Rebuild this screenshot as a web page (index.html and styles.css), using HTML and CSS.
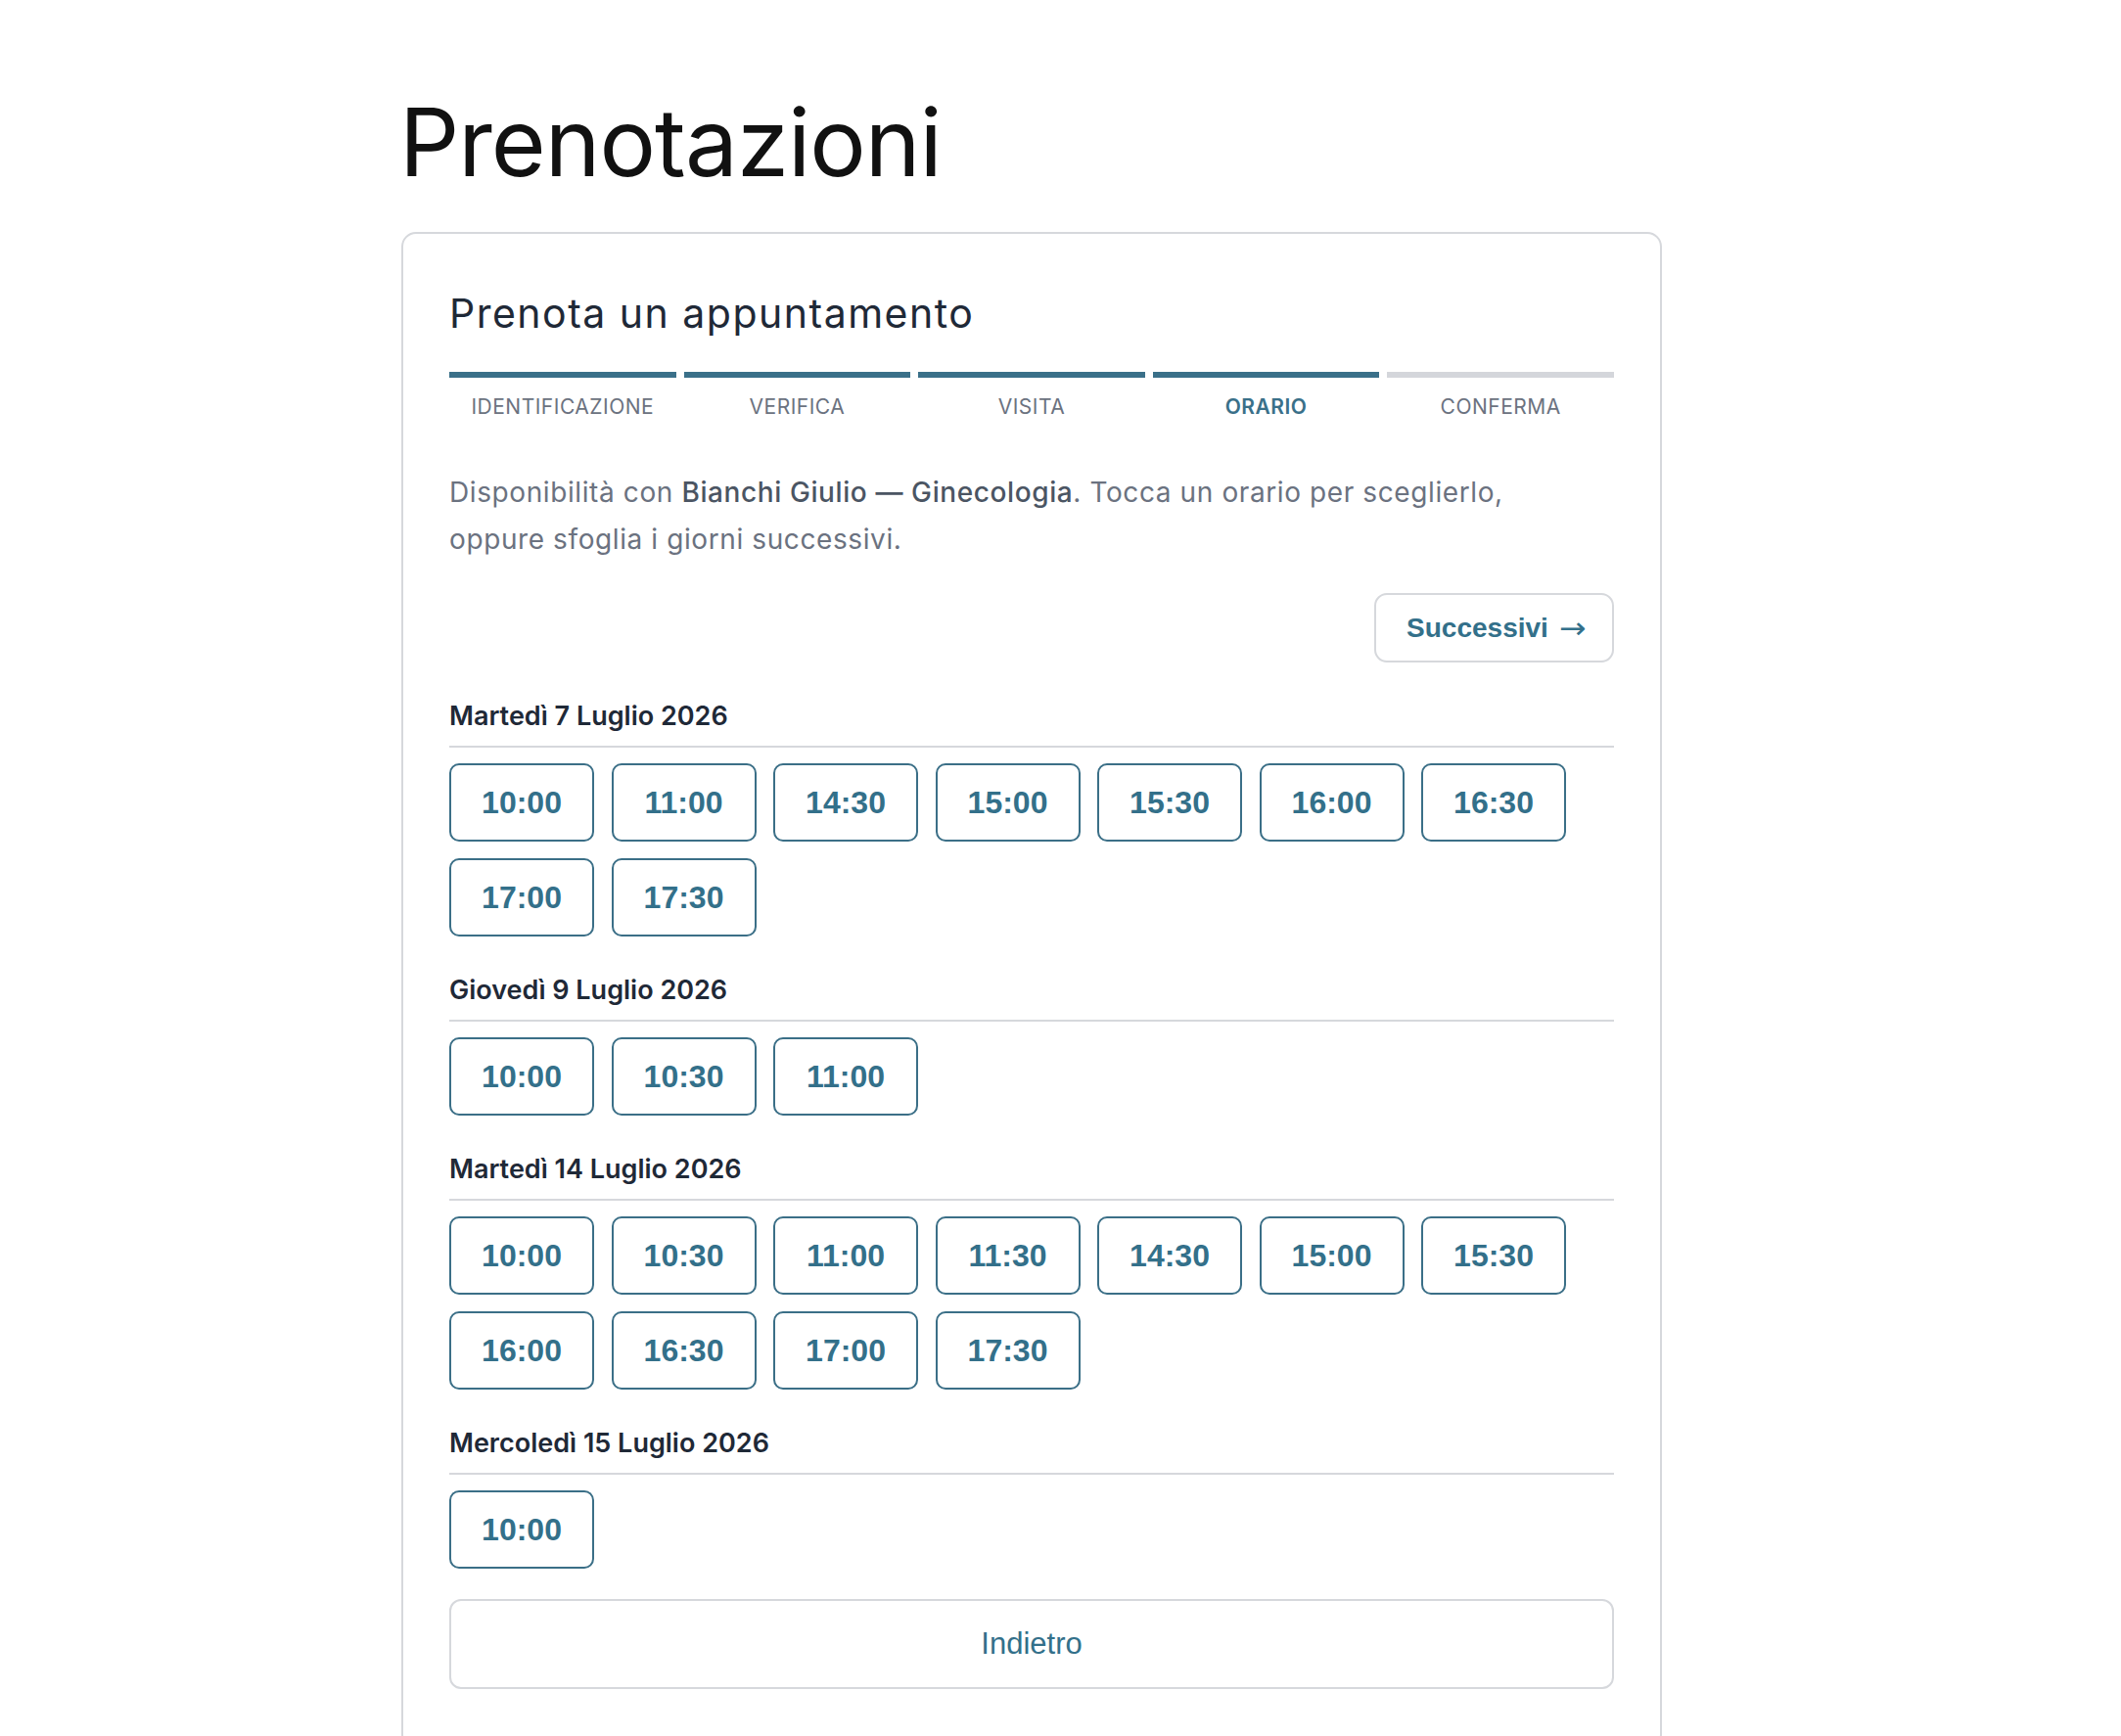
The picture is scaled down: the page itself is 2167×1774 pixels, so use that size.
FILE: index.html
```html
<!DOCTYPE html>
<html lang="it">
<head>
<meta charset="utf-8">
<title>Prenotazioni</title>
<link rel="stylesheet" href="styles.css">
</head>
<body>
<main class="page">
  <h1 class="page-title">Prenotazioni</h1>

  <section class="card">
    <h2 class="card-title">Prenota un appuntamento</h2>

    <ol class="steps">
      <li class="step done"><span class="step-bar"></span><span class="step-label">Identificazione</span></li>
      <li class="step done"><span class="step-bar"></span><span class="step-label">Verifica</span></li>
      <li class="step done"><span class="step-bar"></span><span class="step-label">Visita</span></li>
      <li class="step current"><span class="step-bar"></span><span class="step-label">Orario</span></li>
      <li class="step"><span class="step-bar"></span><span class="step-label">Conferma</span></li>
    </ol>

    <p class="intro">Disponibilità con <strong>Bianchi Giulio — Ginecologia</strong>. Tocca un orario per sceglierlo, oppure sfoglia i giorni successivi.</p>

    <div class="pager">
      <button class="btn-next" type="button">Successivi <span class="arrow">→</span></button>
    </div>

    <div class="day">
      <h3 class="day-title">Martedì 7 Luglio 2026</h3>
      <div class="slots">
        <button class="slot" type="button">10:00</button>
        <button class="slot" type="button">11:00</button>
        <button class="slot" type="button">14:30</button>
        <button class="slot" type="button">15:00</button>
        <button class="slot" type="button">15:30</button>
        <button class="slot" type="button">16:00</button>
        <button class="slot" type="button">16:30</button>
        <button class="slot" type="button">17:00</button>
        <button class="slot" type="button">17:30</button>
      </div>
    </div>

    <div class="day">
      <h3 class="day-title">Giovedì 9 Luglio 2026</h3>
      <div class="slots">
        <button class="slot" type="button">10:00</button>
        <button class="slot" type="button">10:30</button>
        <button class="slot" type="button">11:00</button>
      </div>
    </div>

    <div class="day">
      <h3 class="day-title">Martedì 14 Luglio 2026</h3>
      <div class="slots">
        <button class="slot" type="button">10:00</button>
        <button class="slot" type="button">10:30</button>
        <button class="slot" type="button">11:00</button>
        <button class="slot" type="button">11:30</button>
        <button class="slot" type="button">14:30</button>
        <button class="slot" type="button">15:00</button>
        <button class="slot" type="button">15:30</button>
        <button class="slot" type="button">16:00</button>
        <button class="slot" type="button">16:30</button>
        <button class="slot" type="button">17:00</button>
        <button class="slot" type="button">17:30</button>
      </div>
    </div>

    <div class="day">
      <h3 class="day-title">Mercoledì 15 Luglio 2026</h3>
      <div class="slots">
        <button class="slot" type="button">10:00</button>
      </div>
    </div>

    <button class="btn-back" type="button">Indietro</button>
  </section>
</main>
</body>
</html>
```

FILE: styles.css
```css
* {
  box-sizing: border-box;
}

html, body {
  margin: 0;
  padding: 0;
  background: #ffffff;
}

body {
  font-family: Inter, "Noto Sans", "Liberation Sans", sans-serif;
  color: #1f2937;
}

.page {
  width: 1288px;
  margin-left: 410px;
  padding-top: 88px;
  padding-bottom: 80px;
}

.page-title {
  margin: 0 0 34px -2px;
  font-size: 96px;
  line-height: 115px;
  font-weight: 400;
  letter-spacing: -1px;
  color: #111111;
}

/* booking card */
.card {
  border: 2px solid #d6d8dc;
  border-radius: 15px;
  padding: 56px 47px 60px;
}

.card-title {
  margin: 0;
  font-size: 41px;
  line-height: 50px;
  font-weight: 400;
  letter-spacing: 1.5px;
  color: #1f2937;
}

/* progress steps */
.steps {
  list-style: none;
  margin: 35px 0 0;
  padding: 0;
  display: grid;
  grid-template-columns: repeat(5, 1fr);
  column-gap: 8px;
}

.step {
  display: flex;
  flex-direction: column;
  align-items: center;
}

.step-bar {
  display: block;
  width: 100%;
  height: 6px;
  background: #d4d6db;
}

.step.done .step-bar,
.step.current .step-bar {
  background: #3a7089;
}

.step-label {
  margin-top: 15px;
  font-size: 21px;
  line-height: 30px;
  text-transform: uppercase;
  color: #6b7280;
  letter-spacing: 0.5px;
}

.step.current .step-label {
  color: #3a7089;
  font-weight: 600;
}

.intro {
  max-width: 1110px;
  margin: 48px 0 0;
  font-size: 28px;
  line-height: 48px;
  color: #6b7280;
  letter-spacing: 0.6px;
}

.intro strong {
  font-weight: 500;
  color: #4b5563;
}

.pager {
  display: flex;
  justify-content: flex-end;
  margin-top: 31px;
}

.btn-next {
  display: inline-flex;
  align-items: center;
  gap: 12px;
  height: 71px;
  padding: 0 28px 0 31px;
  border: 2px solid #d6d8dc;
  border-radius: 13px;
  background: #ffffff;
  font-family: "Liberation Sans", Arial, sans-serif;
  font-size: 28px;
  font-weight: 700;
  color: #33708a;
  cursor: pointer;
}

.btn-next .arrow {
  font-family: "DejaVu Sans", sans-serif;
  font-weight: 400;
  font-size: 30px;
  line-height: 1;
  transform: scaleX(1.1);
}

/* day groups */
.day {
  margin-top: 37px;
}

.day-title {
  margin: 0;
  padding-bottom: 12px;
  border-bottom: 2px solid #d6d8dc;
  font-size: 27px;
  line-height: 36px;
  font-weight: 600;
  letter-spacing: 0;
  color: #1f2937;
}

.slots {
  display: flex;
  flex-wrap: wrap;
  column-gap: 17.5px;
  row-gap: 17px;
  margin-top: 16px;
}

.slot {
  width: 148px;
  height: 80px;
  padding: 0;
  border: 2px solid #3b6f87;
  border-radius: 10px;
  background: #ffffff;
  font-family: "Liberation Sans", Arial, sans-serif;
  font-size: 32px;
  font-weight: 700;
  color: #33708a;
  cursor: pointer;
}

.btn-back {
  display: block;
  width: 100%;
  height: 92px;
  margin-top: 31px;
  border: 2px solid #d6d8dc;
  border-radius: 12px;
  background: #ffffff;
  font-family: "Liberation Sans", Arial, sans-serif;
  font-size: 31px;
  font-weight: 400;
  color: #33708a;
  cursor: pointer;
}
```
